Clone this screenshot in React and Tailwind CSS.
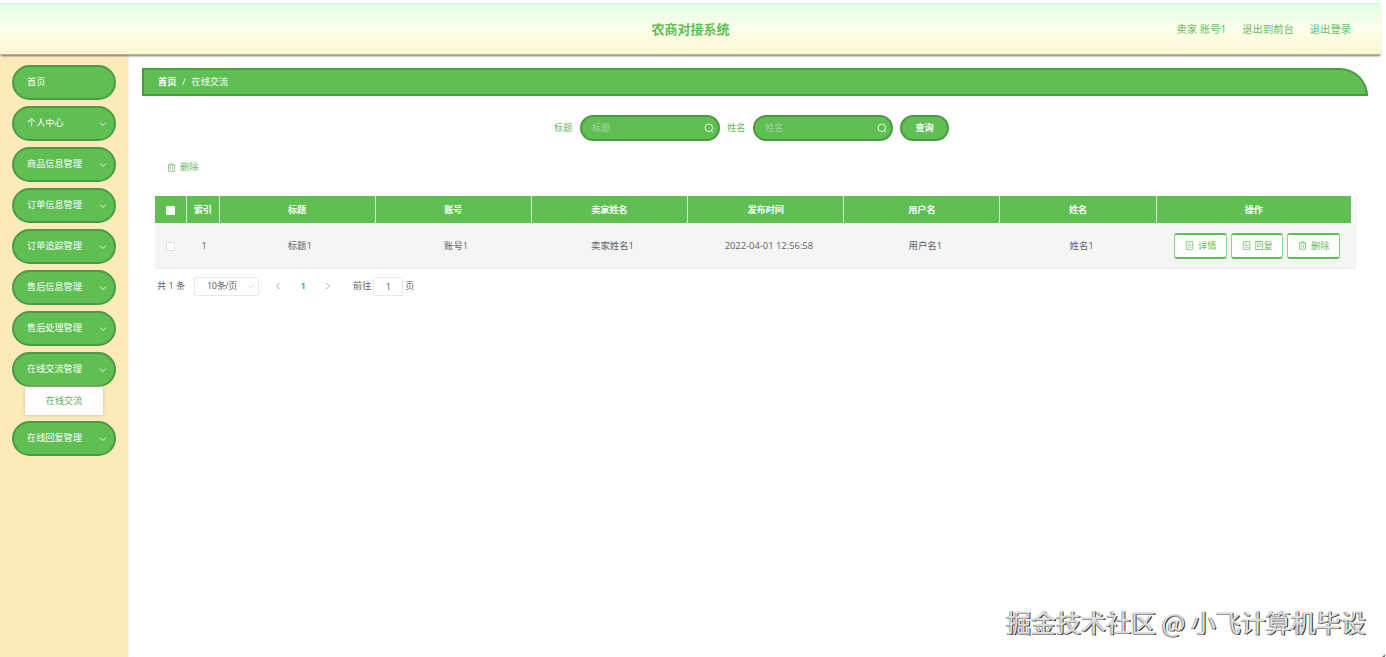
import { useState } from "react";

const menus = [
  { name: "首页" },
  { name: "个人中心", arrow: true },
  { name: "商品信息管理", arrow: true },
  { name: "订单信息管理", arrow: true },
  { name: "订单追踪管理", arrow: true },
  { name: "售后信息管理", arrow: true },
  { name: "售后处理管理", arrow: true },
  { name: "在线交流管理", arrow: true, child: "在线交流" },
  { name: "在线回复管理", arrow: true },
];

const columns = ["标题", "账号", "卖家姓名", "发布时间", "用户名", "姓名"];
const row = ["标题1", "账号1", "卖家姓名1", "2022-04-01 12:56:58", "用户名1", "姓名1"];

const Chevron = ({ className }) => (
  <svg viewBox="0 0 8 8" className={className} fill="none" stroke="currentColor" strokeWidth="0.8">
    <path d="M1 2.5 L4 5.5 L7 2.5" />
  </svg>
);

const TrashIcon = () => (
  <svg viewBox="0 0 10 10" className="size-[9px]" fill="none" stroke="currentColor" strokeWidth="0.8">
    <path d="M0.7 2.4h8.6M3.2 2.4V1h3.6v1.4M1.7 2.4v6.8h6.6V2.4M4 4.3v3M6 4.3v3" />
  </svg>
);

const DocIcon = () => (
  <svg viewBox="0 0 10 10" className="size-[9px]" fill="none" stroke="currentColor" strokeWidth="0.8">
    <path d="M1.4 0.7h7.2v8.6H1.4zM3 3h2.4M3 4.8h4M3 7.2h1.6M5.8 7.2h1.4" />
  </svg>
);

const SearchBox = ({ label }) => {
  const [value, setValue] = useState("");
  return (
    <label className="flex items-center">
      <span className="mr-[7px] w-[19px] whitespace-nowrap text-[#67b95f]">{label}</span>
      <span className="flex h-[26px] w-[140px] items-center rounded-full border-2 border-[#4b9b43] bg-[#5fbf52] pr-[4px] pl-[10px]">
        <input
          value={value}
          onChange={(e) => setValue(e.target.value)}
          placeholder={label}
          className="w-0 flex-1 text-white outline-none placeholder:text-[#a5cfa8]"
        />
        <svg viewBox="0 0 10 10" className="size-[10px] text-white" fill="none" stroke="currentColor" strokeWidth="0.9">
          <circle cx="4.8" cy="4.8" r="3.8" />
          <path d="M7.3 7.5 L9 9.2" />
        </svg>
      </span>
    </label>
  );
};

const ActionButton = ({ icon, text }) => (
  <button className="flex h-[26px] w-[52.5px] items-center justify-center gap-[4px] rounded-[3px] border-x border-y-[2.5px] border-x-[#8fd386] border-y-[#5fbf52] bg-white pb-px text-[#67b95f]">
    {icon}
    {text}
  </button>
);

function App() {
  const [page, setPage] = useState("1");

  return (
    <div className="relative flex h-[657px] w-[1386px] flex-col overflow-hidden bg-white pt-[3px] font-['Open_Sans','Noto_Sans_CJK_SC',sans-serif] text-[9.15px] leading-[14px] text-[#606266]">
      <header className="z-10 grid h-[52px] w-[1381px] shrink-0 grid-cols-[1fr_auto_1fr] items-center border-t border-b border-t-[#d3eee0] border-b-[#b5b09a] bg-linear-to-b from-[#e1ffe3] from-0% via-[#fdffec] via-50% to-[#fcf7d0] to-100% pb-px text-[#67bd5f] shadow-[0_2px_2px_-1px_#766f68]">
        <div></div>
        <h1 className="text-[13px] leading-5 font-bold text-[#5fbf52]">农商对接系统</h1>
        <nav className="flex justify-end gap-[16px] pr-[30px] text-[10.3px]">
          <span>卖家 账号1</span>
          <span>退出到前台</span>
          <span>退出登录</span>
        </nav>
      </header>

      <div className="flex flex-1">
        <aside className="flex w-[128px] shrink-0 flex-col gap-[6px] bg-[#fdeabb] pt-[10px] shadow-[0_0_2px_#d8d3da]">
          {menus.map((m) => (
            <div key={m.name} className="flex flex-col items-center">
              <button className="flex h-[35px] w-[104px] items-center justify-between rounded-full border-2 border-[#4b9b43] bg-[#5fbf52] pr-[7px] pb-px pl-[13px] text-white">
                {m.name}
                {m.arrow && <Chevron className="mt-[2px] size-[8px]" />}
              </button>
              {m.child && (
                <div className="flex h-[28px] w-[78px] items-center justify-center bg-white text-[#67ad60] shadow-[0_0_4px_#c9bd98]">
                  {m.child}
                </div>
              )}
            </div>
          ))}
        </aside>

        <main className="flex-1 pt-[13px] pl-[14px]">
          <div className="flex h-[28px] w-[1226px] items-center gap-[6px] rounded-tr-[28px] border-[2.5px] border-[#4b9b43] bg-[#5fbf52] pb-px pl-[14px] text-white">
            <span className="font-bold">首页</span>
            <span>/</span>
            <span>在线交流</span>
          </div>

          <div className="mt-[19px] flex items-center gap-[7px] pl-[412px]">
            <SearchBox label="标题" />
            <SearchBox label="姓名" />
            <button className="h-[26px] w-[49px] rounded-full border-2 border-[#4b9b43] bg-[#5fbf52] pb-px font-bold text-white">
              查询
            </button>
          </div>

          <button className="mt-[19px] ml-[25px] flex items-center gap-[4px] text-[#67b95f]">
            <TrashIcon />
            删除
          </button>

          <div className="mt-[22px] ml-[12.5px] w-[1201px] border-r border-[#f0f0f4] text-center">
            <div className="grid h-[27px] w-[1196.5px] grid-cols-[32.5px_32.5px_repeat(6,156.2px)_1fr] divide-x divide-[#d9f3d3] bg-[#5fbf52] font-bold text-white">
              <div className="flex items-center justify-center">
                <span className="mt-[2px] size-[9px] rounded-[1px] bg-white"></span>
              </div>
              <div className="flex items-center justify-center">索引</div>
              {columns.map((c) => (
                <div key={c} className="flex items-center justify-center">{c}</div>
              ))}
              <div className="flex items-center justify-center">操作</div>
            </div>
            <div className="grid h-[46px] grid-cols-[32px_35px_repeat(6,156.4px)_1fr] items-center border-b border-[#ebeef5] bg-[#f5f5f6]">
              <div className="flex justify-center">
                <span className="mt-[1px] size-[9px] rounded-[1px] border border-[#dcdfe6] bg-white"></span>
              </div>
              <div>1</div>
              {row.map((r) => (
                <div key={r} className="text-[9.4px]">{r}</div>
              ))}
              <div className="flex justify-center gap-[4px] pt-px">
                <ActionButton icon={<DocIcon />} text="详情" />
                <ActionButton icon={<DocIcon />} text="回复" />
                <ActionButton icon={<TrashIcon />} text="删除" />
              </div>
            </div>
          </div>

          <div className="mt-[7px] ml-[15px] flex h-[20px] items-center">
            <span className="w-[37px]">共 1 条</span>
            <div className="flex h-[19px] w-[65px] items-center justify-between rounded-[2px] border border-[#e6e8ed] pr-[4px] pl-[12px]">
              <span className="tracking-[-0.4px]">10条/页</span>
              <Chevron className="size-[7px] text-[#c0c4cc]" />
            </div>
            <Chevron className="ml-[15px] size-[8px] rotate-90 text-[#8f949c]" />
            <span className="w-[42px] text-center font-bold text-[#30b98c]">1</span>
            <Chevron className="size-[8px] -rotate-90 text-[#8f949c]" />
            <span className="ml-[21px]">前往</span>
            <input
              value={page}
              onChange={(e) => setPage(e.target.value)}
              className="mr-[2px] ml-[2px] h-[19px] w-[30px] rounded-[2px] border border-[#e6e8ed] text-center outline-none"
            />
            <span>页</span>
          </div>
        </main>
      </div>

      <div className="absolute right-[20px] bottom-[17px] font-['Noto_Sans_CJK_SC',sans-serif] text-[25px] leading-[38px] whitespace-nowrap text-[#dedede] [text-shadow:-1px_1px_0_#999,1px_1px_0_#333]">
        掘金技术社区 @ 小飞计算机毕设
      </div>
      <svg viewBox="0 0 3 3" className="absolute right-[1px] bottom-0 size-[3px]" fill="#777">
        <path d="M3 0V3H0z" />
      </svg>
    </div>
  );
}

export default App;
